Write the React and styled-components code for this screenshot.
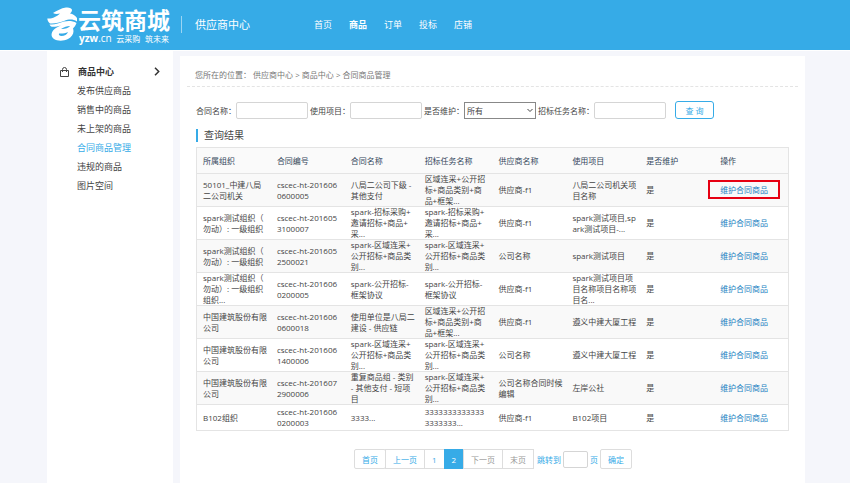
import React from "react";
import styled, { createGlobalStyle } from "styled-components";

const GlobalStyle = createGlobalStyle`
    * {
        box-sizing: border-box;
    }
    body {
        margin: 0;
        background: #f5f6fb;
        color: #444;
        font-family: "Open Sans", "Noto Sans CJK SC", sans-serif;
        font-size: 8px;
        line-height: 11px;
    }
    a {
        color: inherit;
        text-decoration: none;
    }
    input, select, button {
        font: inherit;
        color: inherit;
    }
`;
const Page = styled.div`
    min-height: 100vh;
    display: flex;
    flex-direction: column;
`;
const Header = styled.header`
    height: 51px;
    padding: 0 47px 2px;
    display: flex;
    align-items: center;
    background: #36abe7;
    border-bottom: 1px solid white;
    color: white;
`;
const Logo = styled.a`
    display: flex;
    align-items: center;
`;
const LogoText = styled.div`
    display: flex;
    flex-direction: column;
`;
const Brand = styled.span`
    font-family: "Noto Sans CJK SC", sans-serif;
    font-size: 23px;
    line-height: 28px;
    font-weight: bold;
`;
const Slogan = styled.span`
    display: flex;
    align-items: center;
    justify-content: space-between;
    padding: 0 1px;
    font-size: 8px;
    line-height: 11px;
`;
const Domain = styled.span`
    font-size: 10px;
`;
const Title = styled.h1`
    margin: 0 0 0 11px;
    padding-left: 13px;
    border-left: 1px solid #9bd5f3;
    font-size: 11px;
    line-height: 17px;
    font-weight: normal;
`;
const Nav = styled.nav`
    display: flex;
    gap: 17px;
    margin-left: 64px;
    font-size: 9px;
`;
const NavLink = styled.a`
    font-weight: ${(props) => (props.$active ? "bold" : "normal")};
`;
const Body = styled.div`
    flex: 1;
    display: flex;
    gap: 7px;
    padding: 0 45px 0 47px;
`;
const Sidebar = styled.aside`
    width: 126px;
    flex-shrink: 0;
    padding: 11px 13px;
    background: white;
    font-size: 9px;
`;
const MenuTitle = styled.div`
    display: flex;
    align-items: center;
    height: 19px;
    color: #333;
    font-weight: bold;
    span {
        flex: 1;
        margin-left: 9px;
    }
`;
const Menu = styled.ul`
    list-style: none;
    margin: 0;
    padding: 0 0 0 17px;
`;
const MenuItem = styled.li`
    line-height: 19px;
    color: ${(props) => (props.$active ? "#36abe7" : "#444")};
`;
const Main = styled.main`
    flex: 1;
    min-width: 0;
    margin-top: 5px;
    padding: 0 7px;
    background: white;
`;
const Breadcrumb = styled.div`
    padding: 13px 8px 6px;
    border-bottom: 1px dashed #e4e4e4;
    color: #777;
`;
const Content = styled.div`
    padding: 14px 9px 0;
`;
const Search = styled.form`
    display: flex;
    align-items: center;
`;
const Field = styled.input`
    width: 72px;
    height: 17px;
    margin-right: 2px;
    padding: 0 3px;
    border: 1px solid #d5d5d5;
    border-radius: 2px;
    background: white;
`;
const SelectWrap = styled.div`
    position: relative;
    margin-right: 2px;
    svg {
        position: absolute;
        right: 3px;
        top: 6px;
        pointer-events: none;
    }
`;
const Select = styled.select`
    display: block;
    appearance: none;
    width: 72px;
    height: 17px;
    padding: 0 2px;
    border: 1px solid #888;
    border-radius: 0;
    background: white;
`;
const SearchButton = styled.button`
    width: 39px;
    height: 18px;
    margin-left: 7px;
    padding: 0;
    border: 1px solid #36abe7;
    border-radius: 3px;
    background: white;
    color: #36abe7;
`;
const Heading = styled.h2`
    margin: 10px 0 5px;
    padding-left: 6px;
    border-left: 2px solid #36abe7;
    color: #444;
    font-size: 10px;
    line-height: 13px;
    font-weight: normal;
`;
const Table = styled.table`
    width: 100%;
    table-layout: fixed;
    border-collapse: separate;
    border-spacing: 0;
    border: 1px solid #e4e4e4;
`;
const Th = styled.th`
    height: 25px;
    padding: 0 0 0 6px;
    background: #fafafa;
    color: #34465a;
    font-weight: normal;
    text-align: left;
`;
const Row = styled.tr`
    background: ${(props) => (props.$striped ? "#f9f9f9" : "white")};
`;
const Td = styled.td`
    height: 26px;
    padding: 0 0 0 6px;
    box-shadow: inset 0 1px #e4e4e4;
    white-space: pre-line;
`;
const Action = styled.a`
    display: inline-block;
    margin-left: -12px;
    padding: 2px 10px;
    border: 2px solid ${(props) => (props.$marked ? "#e60012" : "transparent")};
    color: #1a7fc1;
`;
const Pager = styled.nav`
    display: flex;
    justify-content: center;
    align-items: center;
    margin-top: 18px;
    color: #36abe7;
`;
const PageButton = styled.button`
    height: 20px;
    margin-right: -1px;
    padding: 0 7px;
    border: 1px solid ${(props) => (props.$current ? "#36abe7" : "#ddd")};
    background: ${(props) => (props.$current ? "#36abe7" : "white")};
    color: ${(props) => (props.$current ? "white" : "#36abe7")};
    &:disabled {
        color: #999;
    }
    &:first-child, &:last-child {
        border-radius: 2px;
    }
`;
const Jump = styled.label`
    display: flex;
    align-items: center;
    margin: 0 2px 0 4px;
    input {
        width: 25px;
        margin: 0 2px;
    }
`;

const nav = ["首页", "商品", "订单", "投标", "店铺"];
const menu = [
    "发布供应商品",
    "销售中的商品",
    "未上架的商品",
    "合同商品管理",
    "违规的商品",
    "图片空间",
];
const columns = [
    "所属组织",
    "合同编号",
    "合同名称",
    "招标任务名称",
    "供应商名称",
    "使用项目",
    "是否维护",
    "操作",
];
const area = "区域连采+公开招\n标+商品类别+商\n品+框架...";
const sparkArea = "spark-区域连采+\n公开招标+商品类\n别...";
const sparkInvite = "spark-招标采购+\n邀请招标+商品+\n采...";
const sparkOpen = "spark-公开招标-\n框架协议";
const rows = [
    ["50101_中建八局\n二公司机关", "cscec-ht-201606\n0600005", "八局二公司下级 -\n其他支付", area, "供应商-f1", "八局二公司机关项\n目名称"],
    ["spark测试组织（\n勿动）: 一级组织", "cscec-ht-201605\n3100007", sparkInvite, sparkInvite, "供应商-f1", "spark测试项目,sp\nark测试项目-..."],
    ["spark测试组织（\n勿动）: 一级组织", "cscec-ht-201605\n2500021", sparkArea, sparkArea, "公司名称", "spark测试项目"],
    ["spark测试组织（\n勿动）: 一级组织\n组织...", "cscec-ht-201606\n0200005", sparkOpen, sparkOpen, "供应商-f1", "spark测试项目项\n目名称项目名称项\n目名..."],
    ["中国建筑股份有限\n公司", "cscec-ht-201606\n0600018", "使用单位是八局二\n建设 - 供应链", area, "供应商-f1", "遵义中建大厦工程"],
    ["中国建筑股份有限\n公司", "cscec-ht-201606\n1400006", sparkArea, sparkArea, "公司名称", "遵义中建大厦工程"],
    ["中国建筑股份有限\n公司", "cscec-ht-201607\n2900006", "重复商品组 - 类别\n- 其他支付 - 短项\n目", sparkArea, "公司名称合同时候\n编辑", "左岸公社"],
    ["B102组织", "cscec-ht-201606\n0200003", "3333...", "3333333333333\n3333333...", "供应商-f1", "B102项目"],
];

const LogoMark = () => (
    <svg width="31" height="34" viewBox="0 0 31 34" fill="white" aria-hidden="true">
        <path d="M6 6C10 4 14 1 19 .5c3-.3 6 .5 6 2.500 0 1.500-1 2.500-2 3.500 3 .5 5 2 7 4.500v3.500c-4-2.500-8-2.500-13-.5-5 1.500-9 3-14 2.500C1 15 .5 13 .3 11.500 5 12 10 9.500 13 6.500c-2 .5-5 .8-7-.5z" />
        <path d="M2.500 17.500C8 18 12 16 17 14.600c5-1 9-.5 12.500 1.400-1 2.500-2 4-3.500 5.500 1.500 4-.5 8-5 10.500-5 2.500-11 2-14 0-3.500-2-3-6.500 0-9.500 2-2 4.500-3 7-4-4 1.200-8 1.500-10 1-.5-.5-.8-1-1.500-2z" />
        <path d="M14 22c3-2 6-3 9-3-1.500 2-4 3-9 3zM12 26.500c3 .3 6 0 9-1.500-1 2.500-3.500 4-6.500 4-2 0-3-1-2.500-2.500z" fill="#36abe7" />
    </svg>
);

const BagIcon = () => (
    <svg width="9" height="10" viewBox="0 0 9 10" fill="none" stroke="#444" aria-hidden="true">
        <path d="M.5 3.500h8v6h-8zM2.500 5V2.500a2 2 0 0 1 4 0V5" />
    </svg>
);

const App = () => {
    return (
        <Page>
            <GlobalStyle />
            <Header>
                <Logo href="#">
                    <LogoMark />
                    <LogoText>
                        <Brand>云筑商城</Brand>
                        <Slogan>
                            <Domain>
                                <b>yzw</b>.cn
                            </Domain>
                            <span>云采购</span>
                            <span>筑未来</span>
                        </Slogan>
                    </LogoText>
                </Logo>
                <Title>供应商中心</Title>
                <Nav>
                    {nav.map((item) => (
                        <NavLink key={item} href="#" $active={item === "商品"}>
                            {item}
                        </NavLink>
                    ))}
                </Nav>
            </Header>
            <Body>
                <Sidebar>
                    <MenuTitle>
                        <BagIcon />
                        <span>商品中心</span>
                        <svg width="6" height="9" viewBox="0 0 6 9" fill="none" stroke="#333" strokeWidth="1.5">
                            <path d="M1 .8l3.700 3.700L1 8.200" />
                        </svg>
                    </MenuTitle>
                    <Menu>
                        {menu.map((item) => (
                            <MenuItem key={item} $active={item === "合同商品管理"}>
                                <a href="#">{item}</a>
                            </MenuItem>
                        ))}
                    </Menu>
                </Sidebar>
                <Main>
                    <Breadcrumb>您所在的位置： 供应商中心 &gt; 商品中心 &gt; 合同商品管理</Breadcrumb>
                    <Content>
                        <Search>
                            <label htmlFor="contract">合同名称：</label>
                            <Field id="contract" />
                            <label htmlFor="project">使用项目：</label>
                            <Field id="project" />
                            <label htmlFor="maintained">是否维护：</label>
                            <SelectWrap>
                                <Select id="maintained">
                                    <option>所有</option>
                                </Select>
                                <svg width="6" height="5" viewBox="0 0 6 5" fill="none" stroke="#444">
                                    <path d="M.5 1L3 3.500 5.500 1" />
                                </svg>
                            </SelectWrap>
                            <label htmlFor="task">招标任务名称：</label>
                            <Field id="task" />
                            <SearchButton type="button">查 询</SearchButton>
                        </Search>
                        <Heading>查询结果</Heading>
                        <Table>
                            <thead>
                                <tr>
                                    {columns.map((column) => (
                                        <Th key={column}>{column}</Th>
                                    ))}
                                </tr>
                            </thead>
                            <tbody>
                                {rows.map((row, i) => (
                                    <Row key={row[1]} $striped={i % 2 === 0}>
                                        {row.map((cell, j) => (
                                            <Td key={j}>{cell}</Td>
                                        ))}
                                        <Td>是</Td>
                                        <Td>
                                            <Action href="#" $marked={i === 0}>
                                                维护合同商品
                                            </Action>
                                        </Td>
                                    </Row>
                                ))}
                            </tbody>
                        </Table>
                        <Pager>
                            <PageButton>首页</PageButton>
                            <PageButton>上一页</PageButton>
                            <PageButton>1</PageButton>
                            <PageButton $current>2</PageButton>
                            <PageButton disabled>下一页</PageButton>
                            <PageButton disabled>末页</PageButton>
                            <Jump>
                                跳转到
                                <Field />
                                页
                            </Jump>
                            <PageButton>确定</PageButton>
                        </Pager>
                    </Content>
                </Main>
            </Body>
        </Page>
    );
};

export default App;
